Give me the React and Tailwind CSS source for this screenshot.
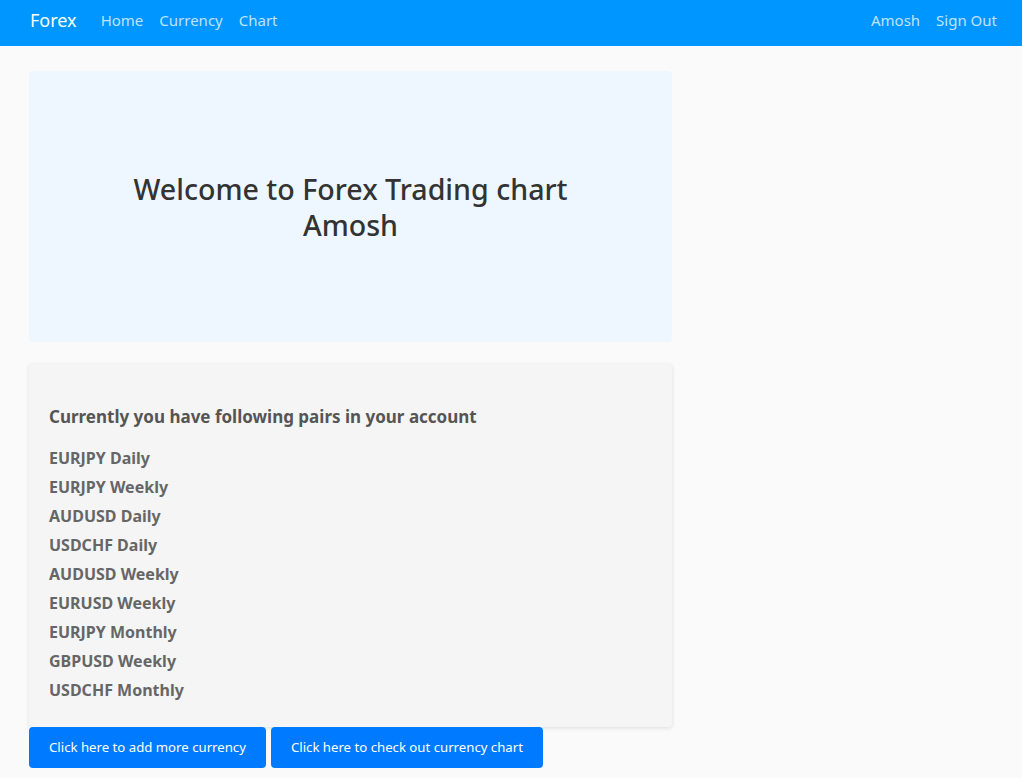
const pairs = [
  "EURJPY Daily",
  "EURJPY Weekly",
  "AUDUSD Daily",
  "USDCHF Daily",
  "AUDUSD Weekly",
  "EURUSD Weekly",
  "EURJPY Monthly",
  "GBPUSD Weekly",
  "USDCHF Monthly",
];

export default function App() {
  return (
    <div
      className="min-h-[778px] bg-[#fafafa] text-[#333]"
      style={{ fontFamily: '"Noto Sans", "Open Sans", sans-serif' }}
    >
      <nav className="h-[46px] bg-[#0096ff] flex items-center justify-between pl-[30px] pr-[25px] pb-[6px]">
        <div className="flex items-center">
          <span className="text-white text-[18px] mr-[24px]">Forex</span>
          <div className="flex gap-[16px] text-[15px] text-white/75">
            <a>Home</a>
            <a>Currency</a>
            <a>Chart</a>
          </div>
        </div>
        <div className="flex gap-[16px] text-[15px] text-white/75">
          <a>Amosh</a>
          <a>Sign Out</a>
        </div>
      </nav>

      <main className="pl-[29px] pt-[25px] w-[672px]">
        <section className="h-[271px] bg-[#eef7ff] rounded-sm flex items-center justify-center">
          <h1 className="text-[28.6px] font-medium leading-[36px] text-center w-[480px] text-[#333]">
            Welcome to Forex Trading chart Amosh
          </h1>
        </section>

        <section className="mt-[22px] bg-[#f5f5f5] rounded shadow-[0_1px_4px_rgba(0,0,0,0.12)] px-[20px] pt-[41px] pb-[22px]">
          <h3 className="text-[17px] font-bold text-[#555] leading-[24px] mb-[15px]">
            Currently you have following pairs in your account
          </h3>
          <ul>
            {pairs.map((p) => (
              <li key={p} className="text-[16px] font-bold text-[#666] leading-[29px]">
                {p}
              </li>
            ))}
          </ul>
        </section>

        <div className="flex gap-[5px]">
          <button className="h-[41px] px-[20px] bg-[#007bff] text-white text-[13.2px] rounded">
            Click here to add more currency
          </button>
          <button className="h-[41px] px-[20px] bg-[#007bff] text-white text-[13.2px] rounded">
            Click here to check out currency chart
          </button>
        </div>
      </main>
    </div>
  );
}
